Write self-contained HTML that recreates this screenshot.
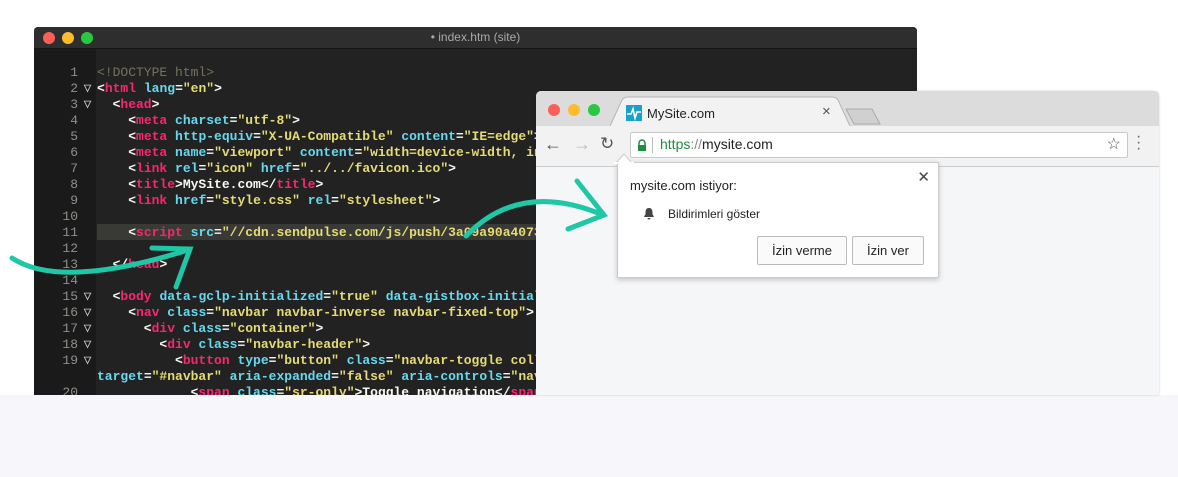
<!DOCTYPE html>
<html><head><meta charset="utf-8"><style>
body{margin:0;width:1178px;height:477px;background:#fff;position:relative;overflow:hidden;font-family:"Liberation Sans",sans-serif}
.band{position:absolute;left:0;top:395px;width:1178px;height:82px;background:#f6f6fb}
.ed{position:absolute;left:34px;top:27px;width:883px;height:368px;background:#222222;overflow:hidden;border-radius:4px 4px 0 0}
.edt{height:21px;background:#2e2e2e;border-bottom:1px solid #151515;color:#aaa;font-size:12px;text-align:center;line-height:21px}
.dot{position:absolute;top:5px;width:12px;height:12px;border-radius:50%}
.gut{position:absolute;left:0;top:22px;width:62px;bottom:0;background:#1a1a1a}
.code{position:absolute;left:0;top:38px;font-family:"Liberation Mono",monospace;font-size:13px;line-height:16px;color:#f8f8f2;white-space:pre;font-weight:bold}
.ln{display:inline-block;width:44px;text-align:right;color:#8f908a;font-weight:normal}
.tr{display:inline-block;width:19px;color:#ccc;font-weight:normal;text-align:center}
.t{color:#f92672}.a{color:#66d9ef}.s{color:#e6db74}.c{color:#75715e;font-weight:normal}
.hl{position:absolute;left:63px;top:197px;width:820px;height:16px;background:#393a35}
.br{position:absolute;left:536px;top:91px;width:623px;height:304px;background:#f5f6f8;border-radius:5px 5px 0 0;overflow:hidden;box-shadow:0 0 2px rgba(0,0,0,.2)}
.tabbar{height:35px;background:#dcdcdc;position:relative}
.tool{height:40px;background:#f2f2f2;border-bottom:1px solid #ccc;position:relative}
.pop{position:absolute;left:617px;top:162px;width:320px;height:114px;background:#fff;border:1px solid #ccc;box-shadow:0 2px 5px rgba(0,0,0,.2);font-size:13px;color:#222}
.btn{position:absolute;top:73px;height:27px;border:1px solid #bbb;border-radius:2px;background:#fafafa;line-height:27px;text-align:center;font-size:13px}
</style></head><body>
<div class="band"></div>
<div class="ed">
<div class="edt">• index.htm (site)</div>
<div class="dot" style="left:9px;background:#fc5f57"></div><div class="dot" style="left:28px;background:#fdbc2e"></div><div class="dot" style="left:47px;background:#28c840"></div>
<div class="gut"></div><div class="hl"></div>
<div class="code"><span class="ln">1</span><span class="tr"> </span><span class="c">&lt;!DOCTYPE html&gt;</span>
<span class="ln">2</span><span class="tr">▽</span>&lt;<span class="t">html</span> <span class="a">lang</span>=<span class="s">"en"</span>&gt;
<span class="ln">3</span><span class="tr">▽</span>  &lt;<span class="t">head</span>&gt;
<span class="ln">4</span><span class="tr"> </span>    &lt;<span class="t">meta</span> <span class="a">charset</span>=<span class="s">"utf-8"</span>&gt;
<span class="ln">5</span><span class="tr"> </span>    &lt;<span class="t">meta</span> <span class="a">http-equiv</span>=<span class="s">"X-UA-Compatible"</span> <span class="a">content</span>=<span class="s">"IE=edge"</span>&gt;
<span class="ln">6</span><span class="tr"> </span>    &lt;<span class="t">meta</span> <span class="a">name</span>=<span class="s">"viewport"</span> <span class="a">content</span>=<span class="s">"width=device-width, initial-scale=1"</span>&gt;
<span class="ln">7</span><span class="tr"> </span>    &lt;<span class="t">link</span> <span class="a">rel</span>=<span class="s">"icon"</span> <span class="a">href</span>=<span class="s">"../../favicon.ico"</span>&gt;
<span class="ln">8</span><span class="tr"> </span>    &lt;<span class="t">title</span>&gt;MySite.com&lt;/<span class="t">title</span>&gt;
<span class="ln">9</span><span class="tr"> </span>    &lt;<span class="t">link</span> <span class="a">href</span>=<span class="s">"style.css"</span> <span class="a">rel</span>=<span class="s">"stylesheet"</span>&gt;
<span class="ln">10</span><span class="tr"> </span>
<span class="ln">11</span><span class="tr"> </span>    &lt;<span class="t">script</span> <span class="a">src</span>=<span class="s">"//cdn.sendpulse.com/js/push/3a09a90a4073c1f2"</span>&gt;
<span class="ln">12</span><span class="tr"> </span>
<span class="ln">13</span><span class="tr"> </span>  &lt;/<span class="t">head</span>&gt;
<span class="ln">14</span><span class="tr"> </span>
<span class="ln">15</span><span class="tr">▽</span>  &lt;<span class="t">body</span> <span class="a">data-gclp-initialized</span>=<span class="s">"true"</span> <span class="a">data-gistbox-initialized</span>=<span class="s">"true"</span>&gt;
<span class="ln">16</span><span class="tr">▽</span>    &lt;<span class="t">nav</span> <span class="a">class</span>=<span class="s">"navbar navbar-inverse navbar-fixed-top"</span>&gt;
<span class="ln">17</span><span class="tr">▽</span>      &lt;<span class="t">div</span> <span class="a">class</span>=<span class="s">"container"</span>&gt;
<span class="ln">18</span><span class="tr">▽</span>        &lt;<span class="t">div</span> <span class="a">class</span>=<span class="s">"navbar-header"</span>&gt;
<span class="ln">19</span><span class="tr">▽</span>          &lt;<span class="t">button</span> <span class="a">type</span>=<span class="s">"button"</span> <span class="a">class</span>=<span class="s">"navbar-toggle collapsed"</span>
<span class="ln"></span><span class="tr"> </span><span class="a">target</span>=<span class="s">"#navbar"</span> <span class="a">aria-expanded</span>=<span class="s">"false"</span> <span class="a">aria-controls</span>=<span class="s">"navbar"</span>&gt;
<span class="ln">20</span><span class="tr"> </span>            &lt;<span class="t">span</span> <span class="a">class</span>=<span class="s">"sr-only"</span>&gt;Toggle navigation&lt;/<span class="t">span</span>&gt;</div>
</div>
<div class="br">
<div class="tabbar">
<div class="dot" style="left:12px;top:13px;background:#fc5f57"></div><div class="dot" style="left:32px;top:13px;background:#fdbc2e"></div><div class="dot" style="left:52px;top:13px;background:#28c840"></div>
<svg style="position:absolute;left:74px;top:0" width="280" height="36"><path d="M0 35 L12 9 Q14 6 18 6 L222 6 Q226 6 228 9 L240 35" fill="#f2f2f2" stroke="#b5b5b5"/><path d="M236 18 L262 18 L270 33 L244 33 Z" fill="#d0d0d0" stroke="#aaa"/></svg>
<div style="position:absolute;left:90px;top:14px;width:16px;height:16px;background:#1aa0d0"><svg width="16" height="16"><path d="M1 9 L5 9 L7 4 L9 13 L11 7 L15 7" stroke="#fff" stroke-width="1.6" fill="none"/></svg></div>
<div style="position:absolute;left:111px;top:15px;font-size:13px;color:#222">MySite.com</div>
<div style="position:absolute;left:286px;top:12px;font-size:15px;color:#555">×</div>
</div>
<div class="tool">
<div style="position:absolute;left:8px;top:8px;font-size:18px;color:#555">←</div>
<div style="position:absolute;left:37px;top:8px;font-size:18px;color:#bbb">→</div>
<div style="position:absolute;left:64px;top:8px;font-size:17px;color:#555">↻</div>
<div style="position:absolute;left:94px;top:6px;width:496px;height:24px;background:#fff;border:1px solid #c9c9c9;border-radius:2px">
<svg style="position:absolute;left:6px;top:6px" width="10" height="12"><path d="M2 6 V4 a3 3 0 0 1 6 0 V6" stroke="#1e8e3e" stroke-width="1.5" fill="none"/><rect x="1" y="6" width="8" height="6" fill="#1e8e3e"/></svg>
<div style="position:absolute;left:21px;top:4px;width:1px;height:16px;background:#bbb"></div>
<div style="position:absolute;left:29px;top:3px;font-size:14px;color:#222"><span style="color:#1e8e3e">https</span><span style="color:#888">://</span>mysite.com</div>
<div style="position:absolute;right:6px;top:1px;font-size:16px;color:#555">☆</div>
</div>
<div style="position:absolute;left:600px;top:8px;font-size:16px;color:#666;line-height:6px">·<br>·<br>·</div>
</div>
</div>
<div class="pop">
<div style="position:absolute;left:12px;top:15px">mysite.com istiyor:</div>
<div style="position:absolute;right:8px;top:5px;font-size:15px;color:#444">✕</div>
<svg style="position:absolute;left:25px;top:44px" width="12" height="14"><path d="M6 1 C2.5 1 2.5 4 2.5 7 L1 10 H11 L9.5 7 C9.5 4 9.5 1 6 1 Z M4.5 11 a1.5 1.5 0 0 0 3 0" fill="#444"/></svg>
<div style="position:absolute;left:50px;top:44px;font-size:12px">Bildirimleri göster</div>
<div class="btn" style="left:139px;width:88px">İzin verme</div>
<div class="btn" style="left:234px;width:70px">İzin ver</div>
</div>
<svg style="position:absolute;left:0;top:0" width="1178" height="477"><g stroke="#1fc7a6" stroke-width="5" fill="none" stroke-linecap="round">
<path d="M12 258 Q60 290 188 250"/><path d="M152 248 L190 249 L176 287"/>
<path d="M466 236 Q520 180 603 215"/><path d="M577 181 L604 215 L568 229"/></g></svg>
<svg style="position:absolute;left:614px;top:152px" width="20" height="12"><path d="M2 11 L10 2 L18 11" fill="#fff" stroke="#ccc"/><rect x="0" y="10" width="20" height="3" fill="#fff"/></svg>
</body></html>
